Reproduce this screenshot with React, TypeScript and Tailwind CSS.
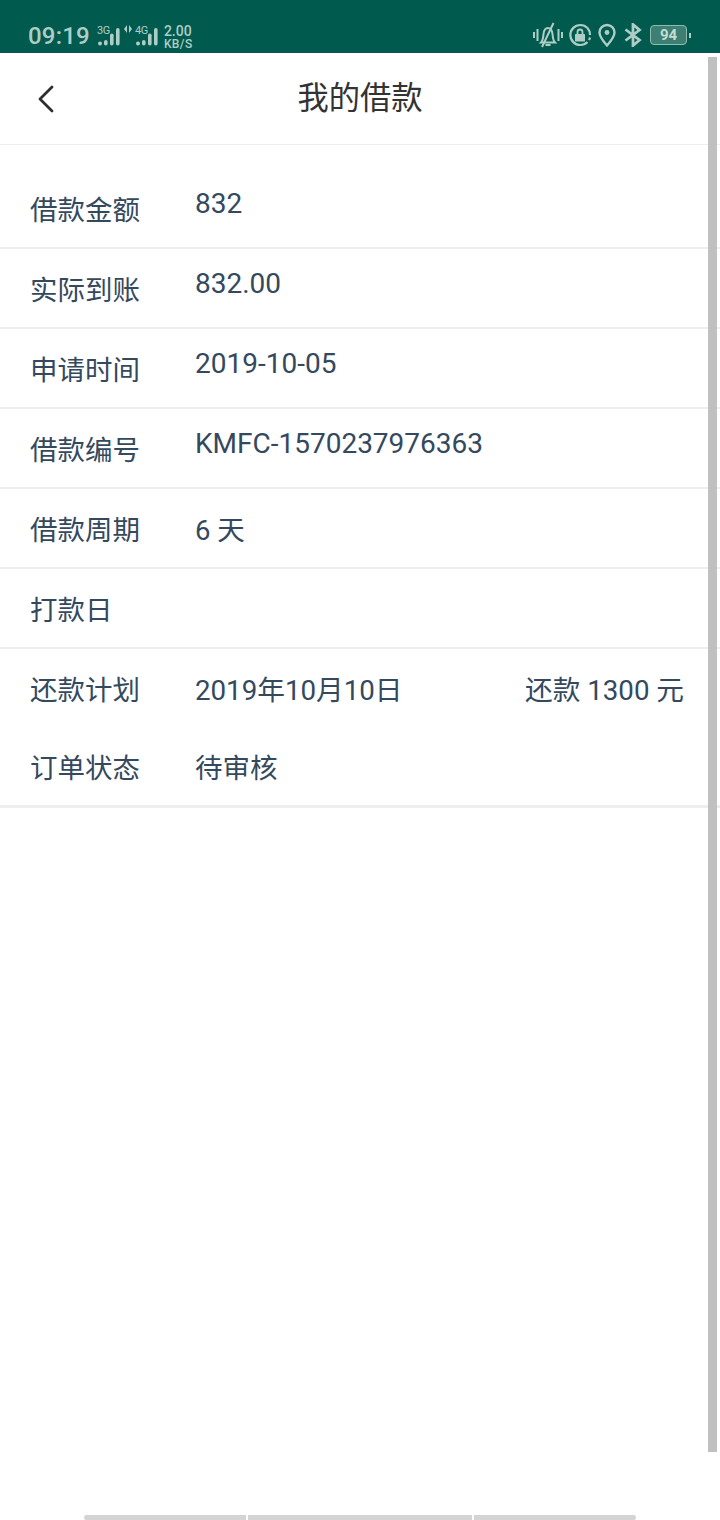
const FONT = "font-['Roboto','Noto_Sans_CJK_SC',sans-serif]";

function Signal({ label }: { label: string }) {
  return (
    <div className="relative w-[24px] h-[22px]">
      <span className="absolute left-0 top-0 text-[11px] leading-[11px] tracking-[-0.3px] text-[#aecdc6]">{label}</span>
      <svg className="absolute left-0 top-0" width="24" height="22" viewBox="0 0 24 22" fill="#aecdc6">
        <circle cx="3" cy="18.500" r="2" />
        <rect x="7" y="15" width="3.600" height="5.500" rx="1.800" />
        <rect x="13" y="8.500" width="3.600" height="12" rx="1.800" />
        <rect x="19" y="3" width="3.600" height="17.500" rx="1.800" />
      </svg>
    </div>
  );
}

function StatusBar() {
  return (
    <div className="h-[53px] bg-[#005a4e] flex items-end justify-between pl-[28px] pr-[29px] pb-[2px] text-[#aecdc6] shrink-0">
      <div className="flex items-end">
        <span className="text-[24px] leading-[30px] font-medium tracking-[0.2px]">09:19</span>
        <div className="ml-[7px] mb-[4px]"><Signal label="3G" /></div>
        <svg className="mb-[18px] ml-[2px]" width="10" height="8" viewBox="0 0 10 8" fill="#aecdc6">
          <path d="M4 0v8L1 4zM6 0v8l3-4z" />
        </svg>
        <div className="ml-[2px] mb-[4px]"><Signal label="4G" /></div>
        <div className="ml-[5px] mb-[1px] flex flex-col items-start text-[14px] leading-[14px] font-medium">
          <span>2.00</span>
          <span className="text-[12px] leading-[12px] tracking-[0.4px]">KB/S</span>
        </div>
      </div>
      <div className="flex items-center mb-[3px]">
        <svg width="30" height="26" viewBox="0 0 30 26" fill="none" stroke="#aecdc6" strokeWidth="2">
          <path d="M1 10v6M4.500 7v12M25.500 7v12M29 10v6" />
          <path d="M8 20.500c2-2 2-4 2.500-8.500C11 8 13 6 15 6s4 2 4.500 6c.5 4.500.5 6.500 2.500 8.500z" />
          <path d="M12.500 23h5M20.500 1L9 25" />
        </svg>
        <svg className="ml-[5px]" width="24" height="24" viewBox="0 0 24 24" fill="none" stroke="#aecdc6" strokeWidth="2.200">
          <path d="M19.500 19A10 10 0 1 1 19.500 5" />
          <path d="M19.500 5A10 10 0 0 1 22 12" />
          <path d="M22 14.500a10 10 0 0 1-1 2.500" />
          <rect x="7" y="11" width="10" height="7.500" rx="0.500" fill="#aecdc6" stroke="none" />
          <path d="M9.500 11V9a2.500 2.500 0 0 1 5 0v2" strokeWidth="1.800" />
        </svg>
        <svg className="ml-[6px]" width="18" height="24" viewBox="0 0 18 24" fill="none" stroke="#aecdc6" strokeWidth="2.400">
          <path d="M9 22.500C5 18 1.500 14 1.500 9.500a7.500 7.500 0 0 1 15 0C16.500 14 13 18 9 22.500z" />
          <circle cx="9" cy="9.500" r="2.400" fill="#aecdc6" stroke="none" />
        </svg>
        <svg className="ml-[8px]" width="18" height="24" viewBox="0 0 18 24" fill="none" stroke="#aecdc6" strokeWidth="2.800">
          <path d="M1.500 6.500L15.500 17 9 22.500V1.500L15.500 7 1.500 17.500" />
        </svg>
        <div className="flex items-center ml-[8px]">
          <div className="w-[37px] h-[20px] rounded-[4px] border border-[#8fbbb1] bg-[#3d8073] flex items-center justify-center text-[15px] font-bold leading-none text-[#c4dcd6]">
            94
          </div>
          <div className="ml-[2px] w-[2px] h-[5px] bg-[#aecdc6]" />
        </div>
      </div>
    </div>
  );
}

function Row({ label, value, raised, right, first }: { label: string; value?: string; raised?: boolean; right?: string; first?: boolean }) {
  return (
    <div className={`flex items-center pl-[30px] pr-[36px] text-[#34495e] border-b-2 border-[#eeeeee] ${first ? "h-[104px] pt-[24px]" : "h-[80px]"}`}>
      <span className="w-[165px] shrink-0 text-[27.500px] leading-[36px] mt-[6px]">{label}</span>
      {value && <span className={`leading-[36px] ${raised ? "text-[28px] -mt-[8px]" : "text-[27.500px] mt-[6px]"}`}>{value}</span>}
      {right && <span className="ml-auto text-[27.700px] leading-[36px] mt-[6px]">{right}</span>}
    </div>
  );
}

function PlainRow({ label, value, right, h }: { label: string; value: string; right?: string; h: string }) {
  return (
    <div className={`flex items-center pl-[30px] pr-[36px] text-[#34495e] ${h}`}>
      <span className="w-[165px] shrink-0 text-[27.500px] leading-[36px] mt-[4px]">{label}</span>
      <span className={`leading-[36px] mt-[4px] ${right ? "text-[27.700px]" : "text-[27.500px]"}`}>{value}</span>
      {right && <span className="ml-auto text-[27.700px] leading-[36px] mt-[4px]">{right}</span>}
    </div>
  );
}

export default function App() {
  return (
    <div className={`relative w-[720px] h-[1520px] bg-white flex flex-col overflow-hidden ${FONT}`}>
      <StatusBar />
      <div className="h-[92px] flex items-center justify-center relative border-b border-[#eeeeee] shrink-0">
        <svg className="absolute left-[38px] top-[32px]" width="16" height="28" viewBox="0 0 16 28" fill="none" stroke="#2e2e2e" strokeWidth="2.800" strokeLinecap="round" strokeLinejoin="round">
          <path d="M14 2L2 14l12 12" />
        </svg>
        <span className="text-[31.250px] leading-[40px] text-[#333333]">我的借款</span>
      </div>
      <div className="flex-1">
        <Row label="借款金额" value="832" raised first />
        <Row label="实际到账" value="832.00" raised />
        <Row label="申请时间" value="2019-10-05" raised />
        <Row label="借款编号" value="KMFC-1570237976363" raised />
        <Row label="借款周期" value="6 天" />
        <Row label="打款日" />
        <PlainRow label="还款计划" value="2019年10月10日" right="还款 1300 元" h="h-[80px]" />
        <div className="border-b-[3px] border-[#eeeeee] h-[79px]">
          <PlainRow label="订单状态" value="待审核" h="h-[76px]" />
        </div>
      </div>
      <div className="h-[5px] mx-[84px] flex gap-[2px] shrink-0">
        <div className="w-[162px] bg-[#d4d4d4] rounded-l-[3px]" />
        <div className="w-[224px] bg-[#d4d4d4]" />
        <div className="w-[162px] bg-[#d4d4d4] rounded-r-[3px]" />
      </div>
      <div className="absolute left-[708px] top-[57px] w-[9px] h-[1395px] bg-[#c0c0c0]" />
    </div>
  );
}
